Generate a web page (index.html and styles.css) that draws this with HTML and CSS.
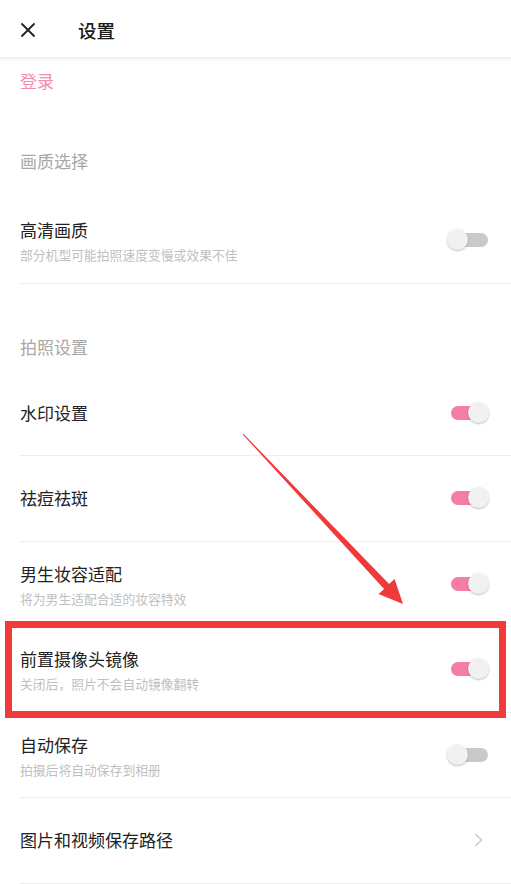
FILE: index.html
```html
<!DOCTYPE html>
<html lang="zh-CN">
<head>
<meta charset="utf-8">
<title>设置</title>
<link rel="stylesheet" href="styles.css">
</head>
<body>
<div class="page">
  <header class="topbar">
    <svg class="close" width="16" height="16" viewBox="0 0 16 16"><path d="M2 2 L14 14 M14 2 L2 14" stroke="#222" stroke-width="1.8" fill="none" stroke-linecap="round"/></svg>
    <span class="title">设置</span>
  </header>

  <div class="login">登录</div>

  <div class="section first">画质选择</div>
  <div class="row two">
    <div class="text"><div class="name">高清画质</div><div class="desc">部分机型可能拍照速度变慢或效果不佳</div></div>
    <div class="toggle off"><span class="track"></span><span class="thumb"></span></div>
  </div>

  <div class="section second">拍照设置</div>
  <div class="row">
    <div class="text"><div class="name">水印设置</div></div>
    <div class="toggle on"><span class="track"></span><span class="thumb"></span></div>
  </div>
  <div class="row">
    <div class="text"><div class="name">祛痘祛斑</div></div>
    <div class="toggle on"><span class="track"></span><span class="thumb"></span></div>
  </div>
  <div class="row two">
    <div class="text"><div class="name">男生妆容适配</div><div class="desc">将为男生适配合适的妆容特效</div></div>
    <div class="toggle on"><span class="track"></span><span class="thumb"></span></div>
  </div>
  <div class="row two">
    <div class="text"><div class="name">前置摄像头镜像</div><div class="desc">关闭后，照片不会自动镜像翻转</div></div>
    <div class="toggle on"><span class="track"></span><span class="thumb"></span></div>
  </div>
  <div class="row two">
    <div class="text"><div class="name">自动保存</div><div class="desc">拍摄后将自动保存到相册</div></div>
    <div class="toggle off"><span class="track"></span><span class="thumb"></span></div>
  </div>
  <div class="row">
    <div class="text"><div class="name">图片和视频保存路径</div></div>
    <svg class="chev" width="9" height="16" viewBox="0 0 9 16"><path d="M1.5 2 L7.5 8 L1.5 14" stroke="#c4c4c4" stroke-width="1.3" fill="none"/></svg>
  </div>

  <div class="highlight"></div>
  <svg class="arrow" width="511" height="884" viewBox="0 0 511 884">
    <polygon points="242.6,434.3 243.4,433.7 389.1,584.1 394.6,579 403,604 378.6,594 384.1,588.9" fill="#f0393a"/>
  </svg>
</div>
</body>
</html>
```

FILE: styles.css
```css
* { box-sizing: border-box; }
html, body { margin: 0; padding: 0; background: #fff; }
body {
  font-family: "Noto Sans CJK SC", "Noto Sans", sans-serif;
  color: #222;
}
.page {
  position: relative;
  width: 511px;
  height: 884px;
  overflow: hidden;
}
.topbar {
  height: 58px;
  display: flex;
  align-items: center;
  padding-left: 20px;
  padding-top: 2px;
  box-shadow: 0 1px 3px rgba(0,0,0,0.08);
  border-bottom: 1px solid #f0f0f0;
  position: relative;
}
.close { margin-top: 1px; }
.title {
  margin-left: 42px;
  font-size: 18.5px;
  line-height: 24px;
  font-weight: 500;
  color: #1a1a1a;
  margin-top: 1px;
}
.login {
  height: 48px;
  padding-left: 20px;
  padding-bottom: 4px;
  display: flex;
  align-items: center;
  font-size: 17px;
  color: #f58db0;
}
.section {
  padding-left: 20px;
  font-size: 17px;
  line-height: 24px;
  color: #a8a8a8;
}
.section.first { padding-top: 43px; padding-bottom: 25px; }
.section.second { padding-top: 51px; padding-bottom: 12px; }
.row {
  height: 85.5px;
  margin-left: 20px;
  border-bottom: 1px solid #eeeeee;
  display: flex;
  align-items: center;
  justify-content: space-between;
  padding-right: 22px;
}
.row.two .text { align-self: flex-start; padding-top: 20px; }
.name {
  font-size: 17px;
  line-height: 24px;
  color: #222;
}
.desc {
  margin-top: 4px;
  font-size: 12.8px;
  line-height: 18px;
  color: #bfbfbf;
}
.toggle {
  position: relative;
  width: 42px;
  height: 22px;
}
.track {
  position: absolute;
  left: 4px;
  top: 4px;
  width: 37px;
  height: 14px;
  border-radius: 7px;
  background: #c9c9c9;
}
.toggle.on .track { background: #f57ea5; }
.thumb {
  position: absolute;
  top: 0;
  width: 21px;
  height: 21px;
  border-radius: 50%;
  background: #f1f1f1;
  box-shadow: 0 1px 2px rgba(0,0,0,0.25);
}
.toggle.off .thumb { left: 0; }
.toggle.on .thumb { right: 0; }
.chev { margin-right: 6px; }
.highlight {
  position: absolute;
  left: 5px;
  top: 621px;
  width: 501px;
  height: 97px;
  border: 7px solid #f2393b;
}
.arrow {
  position: absolute;
  left: 0;
  top: 0;
  pointer-events: none;
}
```
